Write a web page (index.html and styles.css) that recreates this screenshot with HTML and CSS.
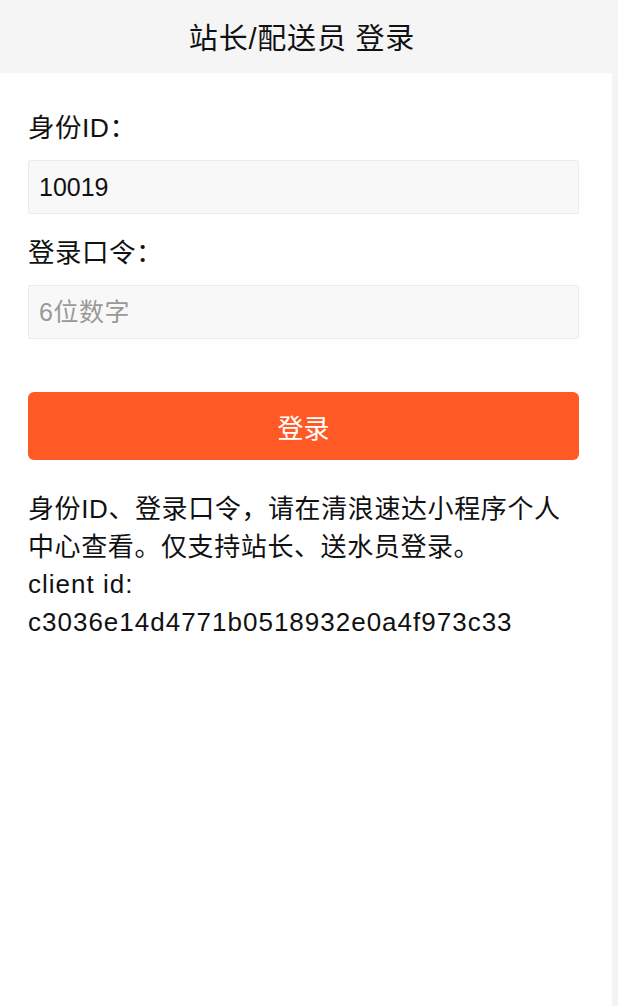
FILE: index.html
```html
<!DOCTYPE html>
<html lang="zh-CN">
<head>
  <meta charset="UTF-8" />
  <meta name="viewport" content="width=device-width, initial-scale=1.0" />
  <title>站长/配送员 登录</title>
  <link rel="stylesheet" href="styles.css">
</head>
<body>
  <header>
    <h1>站长/配送员 登录</h1>
  </header>
  <div class="container">
    <label class="field-label" for="uid">身份ID：</label>
    <input class="field-input" id="uid" type="text" value="10019">
    <label class="field-label" for="pwd">登录口令：</label>
    <input class="field-input" id="pwd" type="password" placeholder="6位数字">
    <button class="login-button">登录</button>
    <p class="tips">
      身份ID、登录口令，请在清浪速达小程序个人中心查看。仅支持站长、送水员登录。<br>
      <span class="client-id">client id:<br>
      c3036e14d4771b0518932e0a4f973c33</span>
    </p>
  </div>
</body>
</html>
```

FILE: styles.css
```css
body {
  font-family: "Liberation Sans", "Noto Sans CJK SC", sans-serif;
  background-color: #f4f4f4;
  color: #111;
  margin: 0;
  padding: 0;
}
header {
  background-color: #f5f5f5;
  height: 73px;
  padding-right: 14px;
  display: flex;
  align-items: center;
  justify-content: center;
}
header h1 {
  margin: 0 0 2px;
  font-size: 29px;
  font-weight: normal;
  letter-spacing: 0.8px;
  color: #111;
}
.container {
  box-sizing: border-box;
  min-height: calc(100vh - 73px);
  background-color: white;
  margin-right: 6px;
  padding: 36px 33px 40px 28px;
}
.field-label {
  display: block;
  font-size: 26.5px;
  line-height: 38px;
  margin-bottom: 13px;
  letter-spacing: 0.5px;
}
.field-label + .field-input + .field-label {
  margin-top: 20px;
}
.field-input {
  display: block;
  box-sizing: border-box;
  width: 100%;
  height: 54px;
  padding: 0 10px;
  font-family: inherit;
  font-size: 25px;
  color: #111;
  background-color: #f8f8f8;
  border: 1px solid #ececec;
  border-radius: 2px;
  outline: none;
}
.field-input::placeholder {
  color: #999;
  letter-spacing: 0.5px;
}
.login-button {
  display: block;
  width: 100%;
  height: 68px;
  margin-top: 53px;
  background-color: #ff5a26;
  color: white;
  border: none;
  border-radius: 6px;
  font-family: inherit;
  font-size: 26px;
  cursor: pointer;
}
.tips {
  margin: 31px 0 0;
  font-size: 26px;
  line-height: 37.5px;
  letter-spacing: 0.6px;
  word-break: break-all;
}
.client-id {
  letter-spacing: 1px;
}
```
